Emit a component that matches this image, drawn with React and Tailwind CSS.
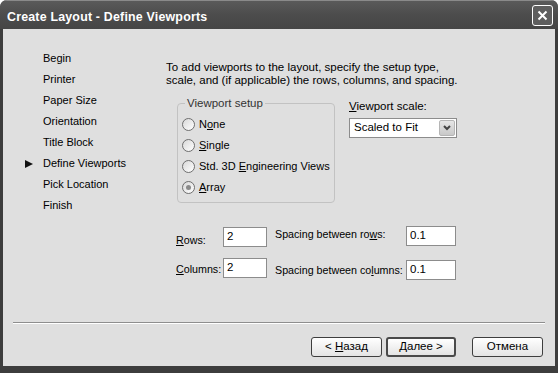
import React from "react";

const NAV = [
  "Begin",
  "Printer",
  "Paper Size",
  "Orientation",
  "Title Block",
  "Define Viewports",
  "Pick Location",
  "Finish",
];

const FONT = { fontFamily: '"Liberation Sans", Arial, sans-serif' };

function Radio({ checked, children }) {
  return (
    <label className="flex h-[21px] items-center gap-[4px] whitespace-nowrap">
      <span className="flex h-[13px] w-[13px] items-center justify-center rounded-full border border-[#6e6e6e] bg-gradient-to-br from-[#d8d8d8] to-white">
        {checked && <span className="h-[5px] w-[5px] rounded-full bg-[#8a8a8a]" />}
      </span>
      <span>{children}</span>
    </label>
  );
}

function TextBox({ value, className }) {
  return (
    <div
      className={
        "flex h-[20px] items-center border border-[#8c8c8c] bg-white pl-[3px] text-[11.5px] " +
        className
      }
    >
      {value}
    </div>
  );
}

function Button({ children, isDefault, className }) {
  return (
    <button
      type="button"
      className={
        "flex h-[20px] items-center justify-center rounded-[3px] bg-gradient-to-b from-white to-[#e4e4e4] " +
        (isDefault ? "border-2 border-[#4a4a4a] " : "border border-[#3e3e3e] ") +
        className
      }
    >
      <span className="whitespace-pre">{children}</span>
    </button>
  );
}

export default function App() {
  return (
    <div
      className="flex h-[373px] w-[558px] flex-col overflow-hidden rounded-t-[7px] bg-[#3d3d3d] text-[11.5px] text-black"
      style={FONT}
    >
      {/* title bar */}
      <div className="flex h-[29px] shrink-0 items-center justify-between border-t border-[#8a8a8a] bg-gradient-to-b from-[#5a5a5a] via-[#4c4c4c] to-[#454545] pl-[7px] pr-[5px]">
        <span className="pt-[4px] text-[12.4px] font-bold tracking-[0.2px] text-white">
          Create Layout - Define Viewports
        </span>
        <button
          type="button"
          className="flex h-[21px] w-[21px] items-center justify-center rounded-[3px] border border-white bg-[#5e5e5e]"
        >
          <svg width="11" height="11" viewBox="0 0 11 11">
            <path d="M1.5 1.5 L9.5 9.5 M9.5 1.5 L1.5 9.5" stroke="white" strokeWidth="2" />
          </svg>
        </button>
      </div>

      {/* body */}
      <div className="mx-[3px] mb-[7px] flex flex-1 flex-col bg-[#dfdfdf]">
        <div className="flex h-[293px]">
          {/* step list */}
          <ul className="w-[160px] pl-[22px] pt-[19px] text-[11px]">
            {NAV.map((item) => (
              <li key={item} className="flex h-[21px] items-center">
                <span className="flex w-[18px] items-center">
                  {item === "Define Viewports" && (
                    <svg width="8" height="8" viewBox="0 0 8 8">
                      <path d="M0 0 L8 4 L0 8 Z" fill="#111" />
                    </svg>
                  )}
                </span>
                <span>{item}</span>
              </li>
            ))}
          </ul>

          {/* content */}
          <div className="flex flex-1 flex-col pl-[3px] pt-[32px]">
            <p className="whitespace-nowrap leading-[13px]">
              To add viewports to the layout, specify the setup type,
              <br />
              scale, and (if applicable) the rows, columns, and spacing.
            </p>

            <div className="mt-[10px] flex">
              <fieldset className="ml-[11px] w-[158px] min-w-0 rounded-[4px] border border-[#c2c2c2] pb-[4px] pl-[4px] text-[11px]">
                <legend className="ml-[3px] px-[2px] text-[11.5px] leading-[13px] text-[#333]">
                  Viewport setup
                </legend>
                <div className="pt-[4px]">
                  <Radio>
                    N<u>o</u>ne
                  </Radio>
                  <Radio>
                    <u>S</u>ingle
                  </Radio>
                  <Radio>
                    Std. 3D <u>E</u>ngineering Views
                  </Radio>
                  <Radio checked>
                    <u>A</u>rray
                  </Radio>
                </div>
              </fieldset>

              <div className="ml-[14px] flex flex-col pt-[3px]">
                <span className="whitespace-nowrap leading-[13px]">
                  <u>V</u>iewport scale:
                </span>
                <div className="mt-[5px] flex h-[20px] w-[108px] items-center justify-between border border-[#8c8c8c] bg-white pl-[4px] pr-[1px]">
                  <span>Scaled to Fit</span>
                  <span className="flex h-[16px] w-[16px] items-center justify-center rounded-[2px] border border-[#b5b5b5] bg-gradient-to-b from-[#e6e6e6] to-[#c8c8c8]">
                    <svg width="8" height="6" viewBox="0 0 8 6">
                      <path d="M1 1 L4 4 L7 1" stroke="#444" strokeWidth="2" fill="none" />
                    </svg>
                  </span>
                </div>
              </div>
            </div>

            {/* rows / columns */}
            <div className="ml-[10px] mt-[23px] flex items-start whitespace-nowrap text-[10.7px]">
              <span className="mt-[8px] w-[47px] leading-[13px]">
                <u>R</u>ows:
              </span>
              <TextBox value="2" className="mt-[1px] w-[44px]" />
              <span className="ml-[8px] mt-[2px] w-[131px] leading-[13px]">
                Spacing between ro<u>w</u>s:
              </span>
              <TextBox value="0.1" className="w-[50px]" />
            </div>
            <div className="ml-[10px] mt-[11px] flex items-start whitespace-nowrap text-[10.7px]">
              <span className="mt-[5px] w-[47px] leading-[13px]">
                <u>C</u>olumns:
              </span>
              <TextBox value="2" className="w-[44px]" />
              <span className="ml-[8px] mt-[6px] w-[131px] leading-[13px]">
                Spacing between co<u>l</u>umns:
              </span>
              <TextBox value="0.1" className="mt-[2px] w-[50px]" />
            </div>
          </div>
        </div>

        {/* separator */}
        <div className="mx-[10px] border-t border-b border-t-[#8e8e8e] border-b-white" />

        {/* buttons */}
        <div className="flex justify-end pr-[12px] pt-[13px]">
          <Button className="w-[71px]">
            {"< "}
            <u>Н</u>азад
          </Button>
          <Button isDefault className="ml-[4px] w-[70px]">
            <u>Д</u>алее{" >"}
          </Button>
          <Button className="ml-[16px] w-[71px]">Отмена</Button>
        </div>
      </div>
    </div>
  );
}
